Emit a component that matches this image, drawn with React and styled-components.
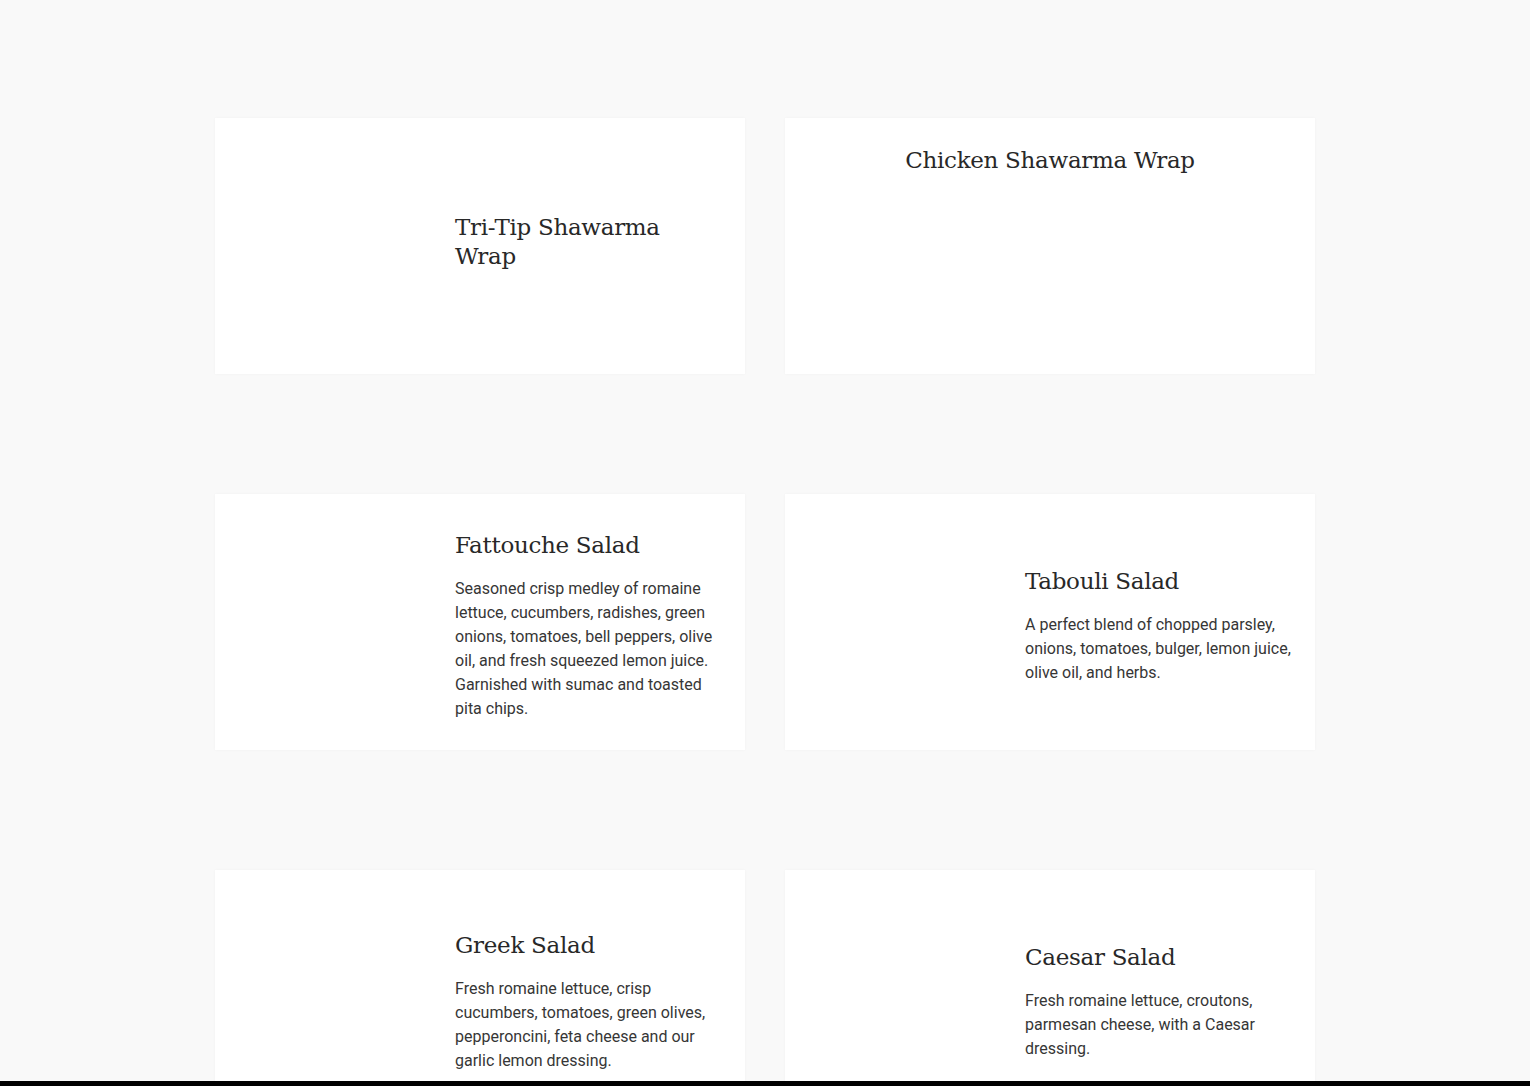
import React from 'react';
import styled, { createGlobalStyle } from 'styled-components';

const GlobalStyle = createGlobalStyle`
  html, body {
    margin: 0;
    padding: 0;
    background: #f9f9f9;
    font-family: Roboto, 'Liberation Sans', sans-serif;
    color: #333;
  }
`

const Page = styled.main`
  display: flex;
  justify-content: center;
  padding-top: 118px;
  min-height: 100vh;
  box-sizing: border-box;
`

const Grid = styled.div`
  display: grid;
  grid-template-columns: repeat(2, 530px);
  column-gap: 40px;
  row-gap: 120px;
  padding-bottom: 120px;
`

const Card = styled.article`
  display: flex;
  align-items: ${(p) => (p.$plain ? 'flex-start' : 'center')};
  justify-content: ${(p) => (p.$plain ? 'center' : 'flex-start')};
  height: 256px;
  box-sizing: border-box;
  background: #fff;
  box-shadow: 0 0 3px rgba(0, 0, 0, 0.035);
  padding: ${(p) => (p.$plain ? '20px 24px 0' : '0 24px 0 240px')};
  text-align: ${(p) => (p.$plain ? 'center' : 'left')};
`

const Body = styled.div`
  width: ${(p) => (p.$plain ? 'auto' : '266px')};
  padding-top: 8px;
`

const Title = styled.h3`
  margin: 0 0 17px;
  font-family: 'DejaVu Serif', 'Liberation Serif', serif;
  font-weight: 400;
  font-size: 23px;
  line-height: 29px;
  letter-spacing: -0.3px;
  color: #282828;
`

const Text = styled.p`
  margin: 0;
  font-size: 16px;
  line-height: 24px;
  color: #363636;
`

const BottomBar = styled.div`
  position: fixed;
  left: 0;
  right: 0;
  bottom: 0;
  height: 5px;
  background: #000;
`

const items = [
  { name: 'Tri-Tip Shawarma Wrap' },
  { name: 'Chicken Shawarma Wrap', plain: true },
  {
    name: 'Fattouche Salad',
    text: 'Seasoned crisp medley of romaine lettuce, cucumbers, radishes, green onions, tomatoes, bell peppers, olive oil, and fresh squeezed lemon juice. Garnished with sumac and toasted pita chips.',
  },
  {
    name: 'Tabouli Salad',
    text: 'A perfect blend of chopped parsley, onions, tomatoes, bulger, lemon juice, olive oil, and herbs.',
  },
  {
    name: 'Greek Salad',
    text: 'Fresh romaine lettuce, crisp cucumbers, tomatoes, green olives, pepperoncini, feta cheese and our garlic lemon dressing.',
  },
  {
    name: 'Caesar Salad',
    text: 'Fresh romaine lettuce, croutons, parmesan cheese, with a Caesar dressing.',
  },
];

export default function App() {
  return (
    <>
      <GlobalStyle />
      <Page>
        <Grid>
          {items.map((item) => (
            <Card key={item.name} $plain={item.plain}>
              <Body $plain={item.plain}>
                <Title>{item.name}</Title>
                {item.text && <Text>{item.text}</Text>}
              </Body>
            </Card>
          ))}
        </Grid>
      </Page>
      <BottomBar />
    </>
  );
}
